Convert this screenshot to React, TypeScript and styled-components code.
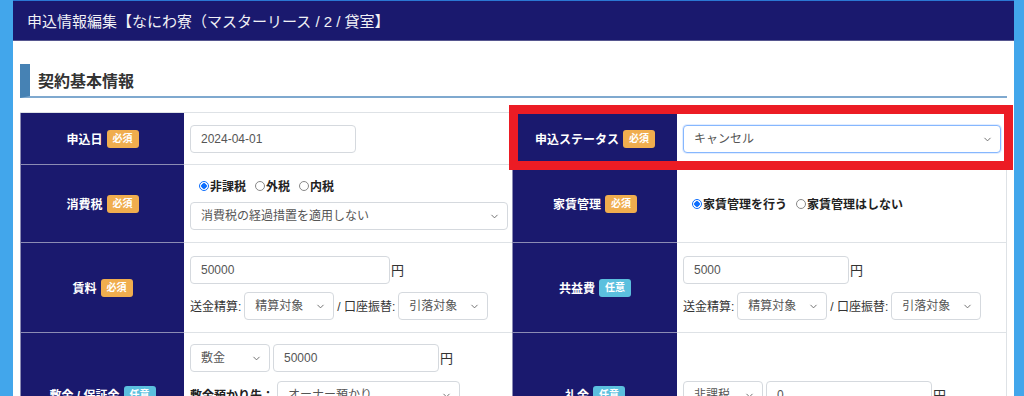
import styled, { createGlobalStyle } from "styled-components";
import { ChevronDown } from "lucide-react";

const GlobalStyle = createGlobalStyle`
    html, body {
        margin: 0;
        overflow: hidden;
    }
    body {
        background: #42a6eb;
        font-family: "Liberation Sans", "Noto Sans CJK JP", sans-serif;
    }
`;

const NAVY = "#1a196e";

const StyledPage = styled.div`
    height: 396px;
    overflow: hidden;
    padding: 0 10px 0 13px;
`;

const StyledModal = styled.div`
    background: #fff;
    min-height: 396px;
`;

const StyledHeader = styled.header`
    height: 39px;
    border-top: 1px solid #2b78d4;
    border-bottom: 1px solid #56568f;
    background: ${NAVY};
    color: #f0f0f5;
    font-size: 15px;
    padding-left: 14px;
    display: flex;
    align-items: center;
`;

const StyledBody = styled.div`
    padding: 23px 7px 0;
`;

const StyledSectionTitle = styled.h2`
    margin: 0;
    height: 32px;
    border-left: 10px solid #4682b4;
    border-bottom: 2px solid #7fa9cf;
    padding-left: 8px;
    font-size: 16px;
    font-weight: 700;
    color: #333;
    display: flex;
    align-items: center;
`;

const StyledTableWrap = styled.div`
    position: relative;
    margin-top: 14px;
`;

const StyledTable = styled.div`
    display: grid;
    grid-template-columns: 164px 328px 165px 330px;
    grid-template-rows: 52px 78px 90px 124px;
    border-top: 1px solid #dee2e6;
`;

const StyledLabel = styled.div`
    box-sizing: border-box;
    background: ${NAVY};
    color: #fff;
    font-weight: 700;
    font-size: 12px;
    display: flex;
    align-items: center;
    justify-content: center;
    gap: 4px;
    border-bottom: 1px solid #8c8cb4;
    border-left: 1px solid #8c8cb4;
`;

const StyledBadge = styled.span<{ $optional?: boolean }>`
    background: ${(p) => (p.$optional ? "#5bc0de" : "#f0ad4e")};
    color: #fff;
    font-size: 10px;
    font-weight: 700;
    padding: 1px 6px;
    border-radius: 3px;
    line-height: 16px;
`;

const StyledValue = styled.div<{ $last?: boolean; $gap?: number }>`
    box-sizing: border-box;
    display: flex;
    flex-direction: column;
    justify-content: center;
    align-items: flex-start;
    gap: ${(p) => p.$gap ?? 8}px;
    padding: 0 6px;
    border-bottom: 1px solid #dee2e6;
    border-right: ${(p) => (p.$last ? "1px solid #dee2e6" : "none")};
    font-size: 12px;
    color: #333;
`;

const StyledLine = styled.div`
    display: flex;
    align-items: center;
    gap: 3px;
`;

const StyledInput = styled.input<{ $w: number }>`
    width: ${(p) => p.$w}px;
    height: 28px;
    box-sizing: border-box;
    border: 1px solid #d5d9de;
    border-radius: 4px;
    padding: 0 10px;
    font-family: inherit;
    font-size: 12px;
    color: #555;
    outline: none;
`;

const StyledSelectWrap = styled.div<{ $w: number }>`
    position: relative;
    width: ${(p) => p.$w}px;
    height: 28px;

    svg {
        position: absolute;
        right: 8px;
        top: 9px;
        color: #666;
        pointer-events: none;
    }
`;

const StyledSelect = styled.select<{ $focus?: boolean }>`
    appearance: none;
    width: 100%;
    height: 28px;
    box-sizing: border-box;
    border: 1px solid ${(p) => (p.$focus ? "#86b7fe" : "#d5d9de")};
    box-shadow: ${(p) => (p.$focus ? "0 0 0 1px rgba(13,110,253,0.12)" : "none")};
    border-radius: 4px;
    padding: 0 24px 0 10px;
    background: #fff;
    font-family: inherit;
    font-size: 12px;
    color: #555;
    outline: none;
`;

const StyledYen = styled.span`
    font-size: 13px;
    color: #333;
    margin-left: -2px;
`;

const StyledRadioGroup = styled.div`
    display: flex;
    align-items: center;
    font-size: 12px;
    font-weight: 700;
    color: #222;
`;

const StyledRadioLabel = styled.label`
    display: flex;
    align-items: center;
`;

const StyledRadio = styled.input`
    appearance: none;
    width: 10px;
    height: 10px;
    margin: 0 1px 0 9px;
    border: 1px solid #888;
    border-radius: 50%;
    box-sizing: border-box;
    background: #fff;

    &:checked {
        border-color: #0d6efd;
        background: radial-gradient(circle, #0d6efd 0 2.5px, #fff 3px);
    }
`;

const StyledBoldText = styled.span`
    font-weight: 700;
    color: #222;
`;

const StyledHighlight = styled.div`
    position: absolute;
    left: 489px;
    top: -7px;
    width: 504px;
    height: 65px;
    box-sizing: border-box;
    border: 9px solid #ec1c24;
    pointer-events: none;
`;

const Select = ({ w, value, focus }: { w: number; value: string; focus?: boolean }) => (
    <StyledSelectWrap $w={w}>
        <StyledSelect $focus={focus} defaultValue={value}>
            <option>{value}</option>
        </StyledSelect>
        <ChevronDown size={11} strokeWidth={2} />
    </StyledSelectWrap>
);

const Label = ({ text, optional }: { text: string; optional?: boolean }) => (
    <StyledLabel>
        {text}
        <StyledBadge $optional={optional}>{optional ? "任意" : "必須"}</StyledBadge>
    </StyledLabel>
);

const Radios = ({ name, options }: { name: string; options: string[] }) => (
    <StyledRadioGroup>
        {options.map((o, i) => (
            <StyledRadioLabel key={o}>
                <StyledRadio type="radio" name={name} defaultChecked={i === 0} />
                {o}
            </StyledRadioLabel>
        ))}
    </StyledRadioGroup>
);

const Transfer = () => (
    <StyledLine>
        送金精算:
        <Select w={90} value="精算対象" />
        / 口座振替:
        <Select w={90} value="引落対象" />
    </StyledLine>
);

export default function App() {
    return (
        <>
            <GlobalStyle />
            <StyledPage>
                <StyledModal>
                    <StyledHeader>申込情報編集【なにわ寮（マスターリース / 2 / 貸室】</StyledHeader>
                    <StyledBody>
                        <StyledSectionTitle>契約基本情報</StyledSectionTitle>
                        <StyledTableWrap>
                            <StyledTable>
                                <Label text="申込日" />
                                <StyledValue>
                                    <StyledInput $w={166} defaultValue="2024-04-01" />
                                </StyledValue>
                                <Label text="申込ステータス" />
                                <StyledValue $last>
                                    <Select w={318} value="キャンセル" focus />
                                </StyledValue>

                                <Label text="消費税" />
                                <StyledValue>
                                    <Radios name="tax" options={["非課税", "外税", "内税"]} />
                                    <Select w={318} value="消費税の経過措置を適用しない" />
                                </StyledValue>
                                <Label text="家賃管理" />
                                <StyledValue $last>
                                    <Radios
                                        name="manage"
                                        options={["家賃管理を行う", "家賃管理はしない"]}
                                    />
                                </StyledValue>

                                <Label text="賃料" />
                                <StyledValue>
                                    <StyledLine>
                                        <StyledInput $w={200} defaultValue="50000" />
                                        <StyledYen>円</StyledYen>
                                    </StyledLine>
                                    <Transfer />
                                </StyledValue>
                                <Label text="共益費" optional />
                                <StyledValue $last>
                                    <StyledLine>
                                        <StyledInput $w={166} defaultValue="5000" />
                                        <StyledYen>円</StyledYen>
                                    </StyledLine>
                                    <Transfer />
                                </StyledValue>

                                <Label text="敷金 / 保証金" optional />
                                <StyledValue $gap={9}>
                                    <StyledLine>
                                        <Select w={80} value="敷金" />
                                        <StyledInput $w={166} defaultValue="50000" />
                                        <StyledYen>円</StyledYen>
                                    </StyledLine>
                                    <StyledLine>
                                        <StyledBoldText>敷金預かり先：</StyledBoldText>
                                        <Select w={183} value="オーナー預かり" />
                                    </StyledLine>
                                    <StyledLine>
                                        <StyledBoldText>償却：</StyledBoldText>
                                        <Select w={120} value="なし" />
                                    </StyledLine>
                                </StyledValue>
                                <Label text="礼金" optional />
                                <StyledValue $last>
                                    <StyledLine>
                                        <Select w={80} value="非課税" />
                                        <StyledInput $w={166} defaultValue="0" />
                                        <StyledYen>円</StyledYen>
                                    </StyledLine>
                                </StyledValue>
                            </StyledTable>
                            <StyledHighlight />
                        </StyledTableWrap>
                    </StyledBody>
                </StyledModal>
            </StyledPage>
        </>
    );
}
